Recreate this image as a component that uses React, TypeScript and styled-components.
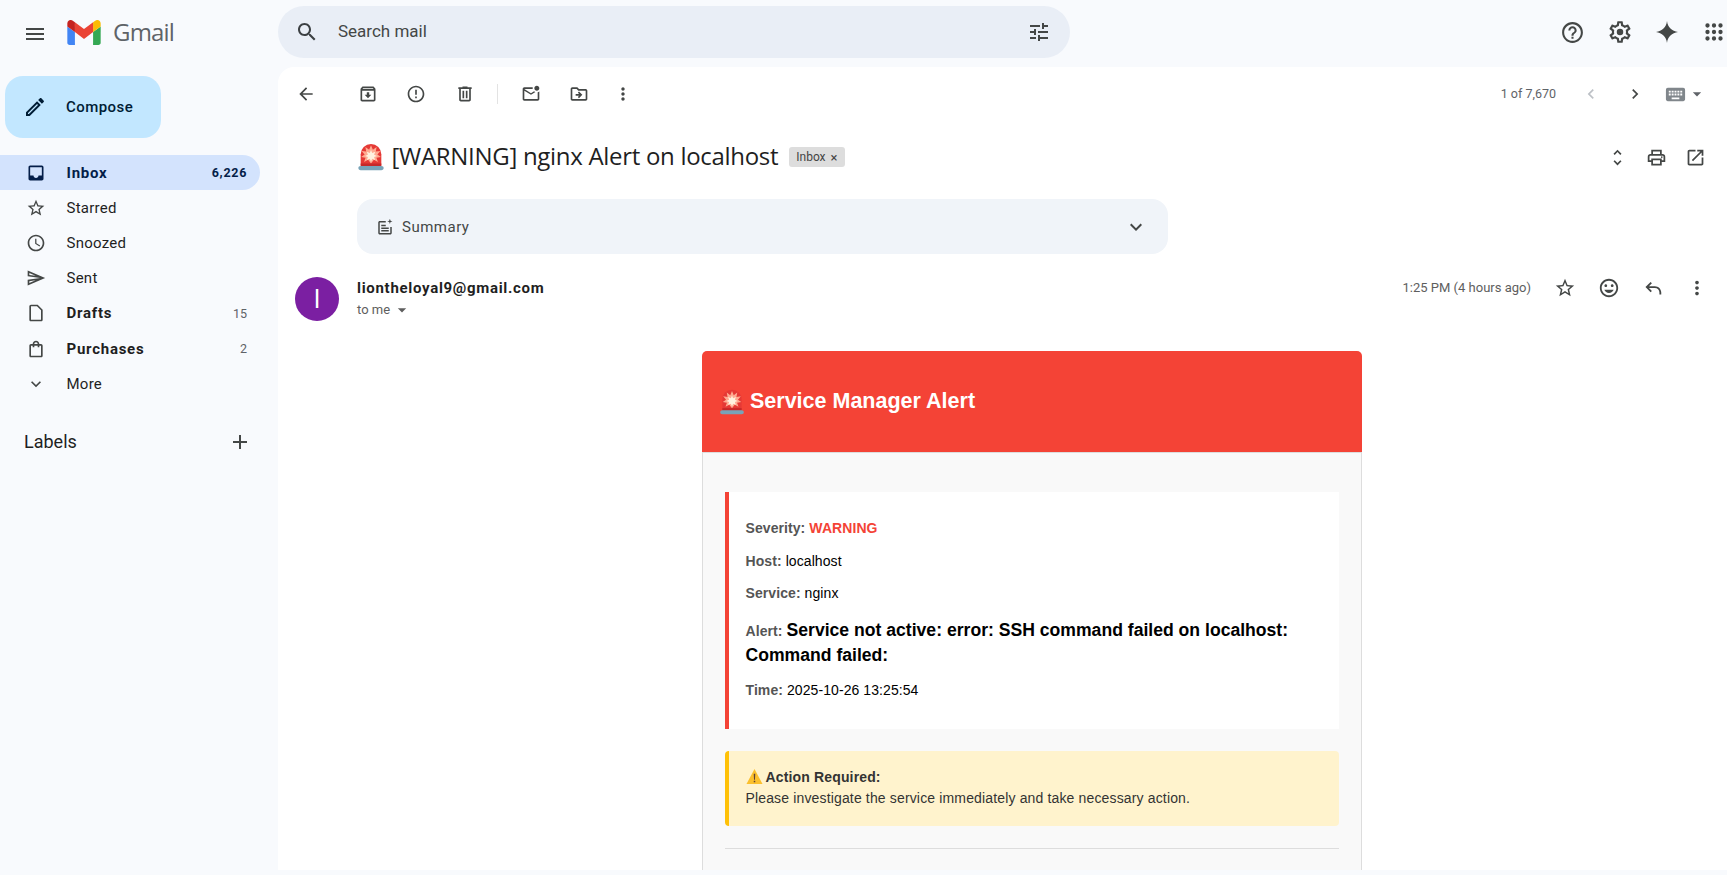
import React, {FC} from 'react'
import styled, {createGlobalStyle} from 'styled-components'

const UI_FONT = `Roboto, "Noto Sans", sans-serif`
const MAIL_FONT = `"Liberation Sans", Arial, sans-serif`

const GlobalStyle = createGlobalStyle`
    html, body {
        margin: 0;
        height: 100%;
        overflow: hidden;
        background: #f8fafd;
        font-family: ${UI_FONT};
    }
`

const paths = {
    menu: 'M3 18h18v-2H3v2zm0-5h18v-2H3v2zm0-7v2h18V6H3z',
    search: 'M15.5 14h-.79l-.28-.27C15.41 12.59 16 11.11 16 9.5 16 5.91 13.09 3 9.5 3S3 5.91 3 9.5 5.91 16 9.5 16c1.61 0 3.09-.59 4.23-1.57l.27.28v.79l5 4.99L20.49 19l-4.99-5zm-6 0C7.01 14 5 11.99 5 9.5S7.01 5 9.5 5 14 7.01 14 9.5 11.99 14 9.5 14z',
    tune: 'M3 17v2h6v-2H3zM3 5v2h10V5H3zm10 16v-2h8v-2h-8v-2h-2v6h2zM7 9v2H3v2h4v2h2V9H7zm14 4v-2H11v2h10zm-6-4h2V7h4V5h-4V3h-2v6z',
    help: 'M11 18h2v-2h-2v2zm1-16C6.48 2 2 6.48 2 12s4.48 10 10 10 10-4.48 10-10S17.52 2 12 2zm0 18c-4.41 0-8-3.59-8-8s3.59-8 8-8 8 3.59 8 8-3.59 8-8 8zm0-14c-2.21 0-4 1.79-4 4h2c0-1.1.9-2 2-2s2 .9 2 2c0 2-3 1.75-3 5h2c0-2.25 3-2.5 3-5 0-2.21-1.79-4-4-4z',
    settings: 'M19.43 12.98c.04-.32.07-.64.07-.98 0-.34-.03-.66-.07-.98l2.11-1.65c.19-.15.24-.42.12-.64l-2-3.46c-.09-.16-.26-.25-.44-.25-.06 0-.12.01-.17.03l-2.49 1c-.52-.4-1.08-.73-1.69-.98l-.38-2.65C14.46 2.18 14.25 2 14 2h-4c-.25 0-.46.18-.49.42l-.38 2.65c-.61.25-1.17.59-1.69.98l-2.49-1c-.06-.02-.12-.03-.18-.03-.17 0-.34.09-.43.25l-2 3.46c-.13.22-.07.49.12.64l2.11 1.65c-.04.32-.07.65-.07.98 0 .33.03.66.07.98l-2.11 1.65c-.19.15-.24.42-.12.64l2 3.46c.09.16.26.25.44.25.06 0 .12-.01.17-.03l2.49-1c.52.4 1.08.73 1.69.98l.38 2.65c.03.24.24.42.49.42h4c.25 0 .46-.18.49-.42l.38-2.65c.61-.25 1.17-.59 1.69-.98l2.49 1c.06.02.12.03.18.03.17 0 .34-.09.43-.25l2-3.46c.12-.22.07-.49-.12-.64l-2.11-1.65zm-1.98-1.71c.04.31.05.52.05.73 0 .21-.02.43-.05.73l-.14 1.13.89.7 1.08.84-.7 1.21-1.27-.51-1.04-.42-.9.68c-.43.32-.84.56-1.25.73l-1.06.43-.16 1.13-.2 1.35h-1.4l-.19-1.35-.16-1.13-1.06-.43c-.43-.18-.83-.41-1.23-.71l-.91-.7-1.06.43-1.27.51-.7-1.21 1.08-.84.89-.7-.14-1.13c-.03-.31-.05-.54-.05-.74s.02-.43.05-.73l.14-1.13-.89-.7-1.08-.84.7-1.21 1.27.51 1.04.42.9-.68c.43-.32.84-.56 1.25-.73l1.06-.43.16-1.13.2-1.35h1.39l.19 1.35.16 1.13 1.06.43c.43.18.83.41 1.23.71l.91.7 1.06-.43 1.27-.51.7 1.21-1.07.85-.89.7.14 1.13zM12 9a3 3 0 1 0 0 6 3 3 0 0 0 0-6z',
    spark: 'M12 1C12.6 7 17 11.4 23 12 17 12.6 12.6 17 12 23 11.4 17 7 12.6 1 12 7 11.4 11.4 7 12 1z',
    apps: 'M6 8a2 2 0 1 0 0-4 2 2 0 0 0 0 4zm6 0a2 2 0 1 0 0-4 2 2 0 0 0 0 4zm6 0a2 2 0 1 0 0-4 2 2 0 0 0 0 4zM6 14a2 2 0 1 0 0-4 2 2 0 0 0 0 4zm6 0a2 2 0 1 0 0-4 2 2 0 0 0 0 4zm6 0a2 2 0 1 0 0-4 2 2 0 0 0 0 4zM6 20a2 2 0 1 0 0-4 2 2 0 0 0 0 4zm6 0a2 2 0 1 0 0-4 2 2 0 0 0 0 4zm6 0a2 2 0 1 0 0-4 2 2 0 0 0 0 4z',
    back: 'M20 11H7.83l5.59-5.59L12 4l-8 8 8 8 1.41-1.41L7.83 13H20v-2z',
    archive: 'M20.54 5.23l-1.39-1.68C18.88 3.21 18.47 3 18 3H6c-.47 0-.88.21-1.16.55L3.46 5.23C3.17 5.57 3 6.02 3 6.5V19c0 1.1.9 2 2 2h14c1.1 0 2-.9 2-2V6.5c0-.48-.17-.93-.46-1.27zM6.24 5h11.52l.83 1H5.42l.82-1zM5 19V8h14v11H5zm8.45-9h-2.9v3H8l4 4 4-4h-2.55z',
    report: 'M11 15h2v2h-2zm0-8h2v6h-2zm.99-5C6.47 2 2 6.48 2 12s4.47 10 9.99 10C17.52 22 22 17.52 22 12S17.52 2 11.99 2zM12 20c-4.42 0-8-3.58-8-8s3.58-8 8-8 8 3.58 8 8-3.58 8-8 8z',
    trash: 'M15 4V3H9v1H4v2h1v13c0 1.1.9 2 2 2h10c1.1 0 2-.9 2-2V6h1V4h-5zm2 15H7V6h10v13zM9 8h2v9H9zm4 0h2v9h-2z',
    unread: 'M22 8.98V18c0 1.1-.9 2-2 2H4c-1.1 0-2-.9-2-2V6c0-1.1.9-2 2-2h10.1c-.06.32-.1.66-.1 1s.04.68.1 1H4l8 5 3.67-2.29c.47.43 1.02.76 1.63.98L12 13 4 8v10h16V9.9c.74-.15 1.42-.48 2-.92zM16 5c0 1.66 1.34 3 3 3s3-1.34 3-3-1.34-3-3-3-3 1.34-3 3z',
    move: 'M20 6h-8l-2-2H4c-1.1 0-1.99.9-1.99 2L2 18c0 1.1.9 2 2 2h16c1.1 0 2-.9 2-2V8c0-1.1-.9-2-2-2zm0 12H4V6h5.17l2 2H20v10zm-8.01-9l-1.41 1.41L12.16 12H8v2h4.16l-1.59 1.59L11.99 17 16 13.01 11.99 9z',
    more: 'M12 8c1.1 0 2-.9 2-2s-.9-2-2-2-2 .9-2 2 .9 2 2 2zm0 2c-1.1 0-2 .9-2 2s.9 2 2 2 2-.9 2-2-.9-2-2-2zm0 6c-1.1 0-2 .9-2 2s.9 2 2 2 2-.9 2-2-.9-2-2-2z',
    left: 'M15.41 7.41L14 6l-6 6 6 6 1.41-1.41L10.83 12z',
    right: 'M10 6L8.59 7.41 13.17 12l-4.58 4.59L10 18l6-6z',
    keyboard: 'M20 5H4c-1.1 0-1.99.9-1.99 2L2 17c0 1.1.9 2 2 2h16c1.1 0 2-.9 2-2V7c0-1.1-.9-2-2-2zm-9 3h2v2h-2V8zm0 3h2v2h-2v-2zM8 8h2v2H8V8zm0 3h2v2H8v-2zm-1 2H5v-2h2v2zm0-3H5V8h2v2zm9 7H8v-2h8v2zm0-4h-2v-2h2v2zm0-3h-2V8h2v2zm3 3h-2v-2h2v2zm0-3h-2V8h2v2z',
    caret: 'M7 10l5 5 5-5z',
    unfold: 'M12 5.83L15.17 9l1.41-1.41L12 3 7.41 7.59 8.83 9 12 5.83zm0 12.34L8.83 15l-1.41 1.41L12 21l4.59-4.59L15.17 15 12 18.17z',
    print: 'M19 8h-1V3H6v5H5c-1.66 0-3 1.34-3 3v6h4v4h12v-4h4v-6c0-1.66-1.34-3-3-3zM8 5h8v3H8V5zm8 12v2H8v-4h8v2zm2-2v-2H6v2H4v-4c0-.55.45-1 1-1h14c.55 0 1 .45 1 1v4h-2zm0-4.5a1 1 0 1 0 0 2 1 1 0 0 0 0-2z',
    open: 'M19 19H5V5h7V3H5c-1.11 0-2 .9-2 2v14c0 1.1.89 2 2 2h14c1.1 0 2-.9 2-2v-7h-2v7zM14 3v2h3.59l-9.83 9.83 1.41 1.41L19 6.41V10h2V3h-7z',
    star: 'M22 9.24l-7.19-.62L12 2 9.19 8.63 2 9.24l5.46 4.73L5.82 21 12 17.27 18.18 21l-1.63-7.03L22 9.24zM12 15.4l-3.76 2.27 1-4.28-3.32-2.88 4.38-.38L12 6.1l1.71 4.04 4.38.38-3.32 2.88 1 4.28L12 15.4z',
    smile: 'M11.99 2C6.47 2 2 6.48 2 12s4.47 10 9.99 10C17.52 22 22 17.52 22 12S17.52 2 11.99 2zM12 20c-4.42 0-8-3.58-8-8s3.58-8 8-8 8 3.58 8 8-3.58 8-8 8zm3.5-9c.83 0 1.5-.67 1.5-1.5S16.33 8 15.5 8 14 8.67 14 9.5s.67 1.5 1.5 1.5zm-7 0c.83 0 1.5-.67 1.5-1.5S9.33 8 8.5 8 7 8.67 7 9.5 7.67 11 8.5 11zm3.5 6.5c2.33 0 4.31-1.46 5.11-3.5H6.89c.8 2.04 2.78 3.5 5.11 3.5z',
    reply: 'M9.4 5.4 10.8 6.8 7.6 10H14c3.9 0 7 3.1 7 7v2h-2v-2c0-2.8-2.2-5-5-5H7.6l3.2 3.2-1.4 1.4L3.8 11z',
    inbox: 'M19 3H4.99c-1.11 0-1.98.89-1.98 2L3 19c0 1.1.88 2 1.99 2H19c1.1 0 2-.9 2-2V5c0-1.11-.9-2-2-2zm0 12h-4c0 1.66-1.35 3-3 3s-3-1.34-3-3H4.99V5H19v10z',
    clock: 'M11.99 2C6.47 2 2 6.48 2 12s4.47 10 9.99 10C17.52 22 22 17.52 22 12S17.52 2 11.99 2zM12 20c-4.42 0-8-3.58-8-8s3.58-8 8-8 8 3.58 8 8-3.58 8-8 8zm.5-13H11v6l5.25 3.15.75-1.23-4.5-2.67z',
    send: 'M4.01 6.03l7.51 3.22-7.52-1 .01-2.22m7.5 8.72L4 17.97v-2.22l7.51-1M2.01 3L2 10l15 2-15 2 .01 7L23 12 2.01 3z',
    draft: 'M14 2H6c-1.1 0-2 .9-2 2v16c0 1.1.9 2 2 2h12c1.1 0 2-.9 2-2V8zM18 20H6V4h7.17L18 8.83z',
    bag: 'M18 6h-2c0-2.21-1.79-4-4-4S8 3.79 8 6H6c-1.1 0-2 .9-2 2v12c0 1.1.9 2 2 2h12c1.1 0 2-.9 2-2V8c0-1.1-.9-2-2-2zm-6-2c1.1 0 2 .9 2 2h-4c0-1.1.9-2 2-2zm6 16H6V8h2v2h2V8h4v2h2V8h2v12z',
    expand: 'M16.59 8.59L12 13.17 7.41 8.59 6 10l6 6 6-6z',
    add: 'M19 13h-6v6h-2v-6H5v-2h6V5h2v6h6v2z',
    edit: 'M3 17.25V21h3.75L17.81 9.94l-3.75-3.75L3 17.25zM5.92 19H5v-.92l9.06-9.06.92.92L5.92 19zM20.71 5.63l-2.34-2.34c-.2-.2-.45-.29-.71-.29s-.51.1-.7.29l-1.83 1.83 3.75 3.75 1.83-1.83c.39-.39.39-1.02 0-1.41z',
    summary: 'M13 4v2H5v14h14v-8h2v8c0 1.1-.9 2-2 2H5c-1.1 0-2-.9-2-2V6c0-1.1.9-2 2-2h8zM7 9h6v2H7V9zm0 3.5h10v2H7v-2zM7 16h10v2H7v-2zM18.5 1l.9 2.6L22 4.5l-2.6.9-.9 2.6-.9-2.6-2.6-.9 2.6-.9z',
}

const Svg = styled.svg<{$size: number; $color: string}>`
    display: block;
    flex: none;
    width: ${(p) => p.$size}px;
    height: ${(p) => p.$size}px;
    fill: ${(p) => p.$color};
`

type IconProps = {name: keyof typeof paths; size?: number; color?: string}

const Icon: FC<IconProps> = ({name, size = 20, color = '#444746'}) => (
    <Svg viewBox="0 0 24 24" $size={size} $color={color}>
        <path d={paths[name]} />
    </Svg>
)

const LogoSvg = styled.svg`
    display: block;
    width: 34px;
    height: 25px;
`

const GmailLogo = () => (
    <LogoSvg viewBox="52 42 88 66">
        <path fill="#4285f4" d="M58 108h14V74L52 59v43c0 3.32 2.69 6 6 6" />
        <path fill="#34a853" d="M120 108h14c3.32 0 6-2.69 6-6V59l-20 15" />
        <path fill="#fbbc04" d="M120 48v26l20-15v-8c0-7.42-8.47-11.65-14.4-7.2" />
        <path fill="#ea4335" d="M72 74V48l24 18 24-18v26L96 92" />
        <path fill="#c5221f" d="M52 51v8l20 15V48l-5.6-4.2c-5.94-4.45-14.4-.22-14.4 7.2" />
    </LogoSvg>
)

const SirenSvg = styled.svg<{$offset?: number}>`
    flex: none;
    display: block;
    margin-left: ${(p) => p.$offset ?? 0}px;
`

const Siren: FC<{size: number; offset?: number}> = ({size, offset}) => (
    <SirenSvg viewBox="0 0 32 32" width={size} height={size} $offset={offset}>
        <path fill="#e53935" d="M5 25V13a11 11 0 0 1 22 0v12z" />
        <path fill="#ffab91" d="M16 3.500l2 4.700 4-3-.9 5 5-.7-3.300 3.800 3.800 2.700-4.800.8 1.600 4.500-4.300-2.300-3.100 4-3.100-4-4.300 2.300 1.600-4.500-4.800-.8 3.800-2.700-3.300-3.800 5 .7-.9-5 4 3z" />
        <path fill="#fff3e0" d="M16 8.500l1.300 3.100 3.200-1.300-1.200 3.200 3.100 1.300-3.100 1.300 1.100 3-3.100-1.200-1.300 3-1.300-3-3.100 1.200 1.100-3-3.100-1.300 3.100-1.300-1.200-3.200 3.200 1.300z" />
        <path fill="#c62828" d="M5 23h22v3H5z" />
        <path fill="#78a3b8" d="M5 25.500h22c1.600 0 2.500 1 2.500 2.300S28.600 30 27 30H5c-1.600 0-2.500-.9-2.500-2.200S3.400 25.500 5 25.500z" />
    </SirenSvg>
)

const WarningSvg = styled.svg`
    display: inline-block;
    width: 17px;
    height: 19px;
    vertical-align: -4px;
    margin-right: 3px;
`

const WarningSign = () => (
    <WarningSvg viewBox="0 0 18 18">
        <path fill="#fbc02d" d="M9 1 17.500 17h-17z" />
        <path fill="#5d4037" d="M8.200 6h1.600l-.3 6.500h-1zM8.200 13.500h1.600v1.600H8.200z" />
    </WarningSvg>
)

const Page = styled.div`
    height: 875px;
    width: 1727px;
    overflow: hidden;
`

const TopBar = styled.header`
    height: 67px;
    display: flex;
    align-items: center;
`

const Brand = styled.div`
    width: 278px;
    flex: none;
    display: flex;
    align-items: center;
    padding-left: 23px;
    box-sizing: border-box;
`

const BrandLogo = styled.div`
    margin-left: 20px;
    margin-top: -2px;
`

const BrandName = styled.span`
    margin-left: 12px;
    margin-top: -5px;
    font-family: "Open Sans", sans-serif;
    font-size: 24px;
    letter-spacing: -0.8px;
    color: #5f6368;
`

const SearchBox = styled.div`
    width: 792px;
    height: 52px;
    margin-top: -3px;
    flex: none;
    display: flex;
    align-items: center;
    padding: 0 19px 0 17px;
    box-sizing: border-box;
    background: #e9eef6;
    border-radius: 26px;
`

const SearchText = styled.span`
    flex: 1;
    margin: -2px 0 0 19px;
    font-size: 17px;
    color: #444746;
`

const TopActions = styled.div`
    margin-left: auto;
    display: flex;
    align-items: center;
    gap: 22px;
    margin-top: -3px;
    & > :last-child {
        margin-left: 0;
    }
`

const Body = styled.div`
    display: flex;
    height: 803px;
`

const Sidebar = styled.aside`
    width: 278px;
    flex: none;
    padding-top: 9px;
    box-sizing: border-box;
`

const ComposeButton = styled.div`
    width: 156px;
    height: 62px;
    margin-left: 5px;
    display: flex;
    align-items: center;
    gap: 19px;
    padding-left: 18px;
    box-sizing: border-box;
    background: #c2e7ff;
    border-radius: 18px;
    font-size: 15px;
    font-weight: 500;
    letter-spacing: .45px;
    color: #001d35;
`

const NavList = styled.nav`
    margin-top: 17px;
    width: 260px;
`

const NavRow = styled.div<{$active?: boolean; $strong?: boolean}>`
    height: 35.200px;
    display: flex;
    align-items: center;
    gap: 20.500px;
    padding: 0 13px 0 26px;
    box-sizing: border-box;
    border-radius: 0 18px 18px 0;
    font-size: 15px;
    font-weight: ${(p) => (p.$strong ? 700 : 400)};
    letter-spacing: ${(p) => (p.$strong ? '.75px' : '.25px')};
    color: ${(p) => (p.$active ? '#041e49' : '#1f1f1f')};
    background: ${(p) => (p.$active ? '#d3e3fd' : 'transparent')};
`

const NavLabel = styled.span`
    flex: 1;
`

const NavCount = styled.span<{$active?: boolean}>`
    font-size: 12.500px;
    font-weight: ${(p) => (p.$active ? 700 : 400)};
    letter-spacing: ${(p) => (p.$active ? '.7px' : '0')};
    color: ${(p) => (p.$active ? '#041e49' : '#5f6368')};
`

const LabelsHeader = styled.div`
    margin-top: 22.500px;
    width: 260px;
    height: 36px;
    display: flex;
    align-items: center;
    justify-content: space-between;
    padding: 0 8px 0 24px;
    box-sizing: border-box;
    font-size: 18px;
    color: #1f1f1f;
`

const Panel = styled.main`
    flex: 1;
    background: #fff;
    border-radius: 16px 0 0 0;
    overflow: hidden;
    display: flex;
    flex-direction: column;
`

const Toolbar = styled.div`
    height: 54px;
    flex: none;
    display: flex;
    align-items: center;
    padding: 0 0 0 8px;
`

const ToolButton = styled.div<{$gap?: number; $width?: number}>`
    width: ${(p) => p.$width ?? 40}px;
    height: 40px;
    margin-left: ${(p) => p.$gap ?? 8}px;
    flex: none;
    display: flex;
    align-items: center;
    justify-content: center;
`

const Divider = styled.div`
    width: 1px;
    height: 20px;
    margin-left: 12px;
    background: #e3e3e3;
`

const Pager = styled.span`
    margin-left: auto;
    font-size: 12.500px;
    margin-top: -1px;
    color: #5f6368;
`

const KeyboardPick = styled.div`
    display: flex;
    align-items: center;
    margin: 0 20px 0 9px;
`

const SubjectRow = styled.div`
    height: 72px;
    flex: none;
    display: flex;
    align-items: center;
    padding-left: 78px;
    padding-right: 21px;
`

const SubjectText = styled.h1`
    margin: -4px 0 0 5.500px;
    font-size: 24px;
    font-weight: 400;
    font-family: "Open Sans", sans-serif;
    letter-spacing: -0.3px;
    color: #1f1f1f;
    white-space: nowrap;
`

const InboxChip = styled.span`
    margin-left: 11px;
    height: 20px;
    padding: 0 7px;
    display: flex;
    align-items: center;
    gap: 5px;
    background: #dddddd;
    border-radius: 3px;
    font-size: 12px;
    color: #444;
`

const ChipClose = styled.span`
    font-size: 13px;
    color: #444;
`

const SubjectActions = styled.div`
    margin-left: auto;
    display: flex;
    align-items: center;
    gap: 18px;
`

const SummaryCard = styled.div`
    width: 811px;
    height: 55px;
    margin: 6px 0 0 79px;
    flex: none;
    display: flex;
    align-items: center;
    padding: 0 20px 0 19px;
    box-sizing: border-box;
    background: #f0f4f9;
    border-radius: 16px;
    font-size: 15px;
    font-weight: 400;
    letter-spacing: .5px;
    color: #444746;
`

const SummaryLabel = styled.span`
    flex: 1;
    margin-left: 8px;
`

const SenderRow = styled.div`
    flex: none;
    display: flex;
    margin-top: 23px;
    padding: 0 19px 0 17px;
`

const Avatar = styled.div`
    width: 44px;
    height: 44px;
    flex: none;
    border-radius: 50%;
    background: #7b1fa2;
    color: #fff;
    font-size: 25px;
    display: flex;
    align-items: center;
    justify-content: center;
`

const SenderInfo = styled.div`
    margin-left: 18px;
    flex: 1;
`

const SenderName = styled.div`
    font-size: 15px;
    font-weight: 700;
    letter-spacing: .7px;
    line-height: 22px;
    color: #1f1f1f;
`

const ToMe = styled.div`
    margin-top: 1px;
    display: flex;
    align-items: center;
    gap: 2px;
    font-size: 13px;
    line-height: 18px;
    color: #5e5e5e;
`

const MessageMeta = styled.div`
    display: flex;
    align-items: flex-start;
    gap: 23px;
`

const TimeStamp = styled.span`
    font-size: 13px;
    line-height: 22px;
    color: #5e5e5e;
`

const MetaIcons = styled.div`
    display: flex;
    gap: 22px;
`

const MailArea = styled.div`
    flex: 1;
    display: flex;
    justify-content: center;
    padding: 30px 20px 0 79px;
    min-height: 0;
`

const MailCard = styled.article`
    width: 660px;
    flex: none;
    font-family: ${MAIL_FONT};
    font-size: 14px;
    color: #000;
`

const MailHeader = styled.div`
    background: #f44336;
    border-radius: 5px 5px 0 0;
    padding: 20px;
    color: #fff;
`

const MailTitle = styled.h2`
    margin: 18px 0;
    height: 25px;
    display: flex;
    align-items: center;
    gap: 4px;
    font-size: 21.500px;
    line-height: 25px;
    font-weight: 700;
`

const MailBody = styled.div`
    background: #f9f9f9;
    border: 1px solid #ddd;
    padding: 0 22px 40px;
`

const Details = styled.div`
    margin-top: 39px;
    background: #fff;
    border-left: 4px solid #f44336;
    padding: 15px 15px 17.500px 16.500px;
`

const DetailLine = styled.p<{$tall?: boolean}>`
    margin: ${(p) => (p.$tall ? '13px' : '10px')} 0 10px;
    line-height: 22.500px;
    letter-spacing: .08px;
`

const DetailKey = styled.strong`
    color: #555;
`

const Severity = styled.strong`
    color: #f44336;
`

const BigAlert = styled.strong`
    font-size: 17.600px;
    line-height: 25.500px;
    letter-spacing: 0;
`

const ActionBox = styled.div`
    margin-top: 22px;
    background: #fff3cd;
    border-left: 4px solid #ffc107;
    border-radius: 4px;
    padding: 16px 15px 16px 16.500px;
    line-height: 21.800px;
    letter-spacing: .15px;
    color: #333;
`

const Rule = styled.hr`
    margin: 21.500px 0 0;
    border: 0;
    border-top: 1px solid #ddd;
`

const navItems: {icon: keyof typeof paths; label: string; count?: string; strong?: boolean; active?: boolean}[] = [
    {icon: 'inbox', label: 'Inbox', count: '6,226', strong: true, active: true},
    {icon: 'star', label: 'Starred'},
    {icon: 'clock', label: 'Snoozed'},
    {icon: 'send', label: 'Sent'},
    {icon: 'draft', label: 'Drafts', count: '15', strong: true},
    {icon: 'bag', label: 'Purchases', count: '2', strong: true},
    {icon: 'expand', label: 'More'},
]

export default function App() {
    return (
        <Page>
            <GlobalStyle />
            <TopBar>
                <Brand>
                    <Icon name="menu" size={24} />
                    <BrandLogo><GmailLogo /></BrandLogo>
                    <BrandName>Gmail</BrandName>
                </Brand>
                <SearchBox>
                    <Icon name="search" size={24} color="#3c4043" />
                    <SearchText>Search mail</SearchText>
                    <Icon name="tune" size={24} />
                </SearchBox>
                <TopActions>
                    <Icon name="help" size={25} />
                    <Icon name="settings" size={26} />
                    <Icon name="spark" size={24} />
                    <Icon name="apps" size={26} />
                </TopActions>
            </TopBar>
            <Body>
                <Sidebar>
                    <ComposeButton>
                        <Icon name="edit" size={24} color="#001d35" />
                        Compose
                    </ComposeButton>
                    <NavList>
                        {navItems.map((item) => (
                            <NavRow key={item.label} $active={item.active} $strong={item.strong}>
                                <Icon name={item.icon} size={20} color={item.active ? '#041e49' : '#444746'} />
                                <NavLabel>{item.label}</NavLabel>
                                {item.count && <NavCount $active={item.active}>{item.count}</NavCount>}
                            </NavRow>
                        ))}
                    </NavList>
                    <LabelsHeader>
                        Labels
                        <Icon name="add" size={24} />
                    </LabelsHeader>
                </Sidebar>
                <Panel>
                    <Toolbar>
                        <ToolButton $gap={0}><Icon name="back" /></ToolButton>
                        <ToolButton $gap={22}><Icon name="archive" /></ToolButton>
                        <ToolButton><Icon name="report" /></ToolButton>
                        <ToolButton $gap={9}><Icon name="trash" /></ToolButton>
                        <Divider />
                        <ToolButton $gap={13}><Icon name="unread" /></ToolButton>
                        <ToolButton><Icon name="move" /></ToolButton>
                        <ToolButton $gap={4}><Icon name="more" /></ToolButton>
                        <Pager>1 of 7,670</Pager>
                        <ToolButton $gap={15}><Icon name="left" color="#bdc1c6" /></ToolButton>
                        <ToolButton $gap={4}><Icon name="right" /></ToolButton>
                        <KeyboardPick>
                            <Icon name="keyboard" size={23} color="#80868b" />
                            <Icon name="caret" size={20} color="#5f6368" />
                        </KeyboardPick>
                    </Toolbar>
                    <SubjectRow>
                        <Siren size={30} />
                        <SubjectText>[WARNING] nginx Alert on localhost</SubjectText>
                        <InboxChip>Inbox<ChipClose>×</ChipClose></InboxChip>
                        <SubjectActions>
                            <Icon name="unfold" size={21} />
                            <Icon name="print" size={21} />
                            <Icon name="open" size={21} />
                        </SubjectActions>
                    </SubjectRow>
                    <SummaryCard>
                        <Icon name="summary" size={18} />
                        <SummaryLabel>Summary</SummaryLabel>
                        <Icon name="expand" size={24} />
                    </SummaryCard>
                    <SenderRow>
                        <Avatar>l</Avatar>
                        <SenderInfo>
                            <SenderName>liontheloyal9@gmail.com</SenderName>
                            <ToMe>to me<Icon name="caret" size={20} color="#5e5e5e" /></ToMe>
                        </SenderInfo>
                        <MessageMeta>
                            <TimeStamp>1:25 PM (4 hours ago)</TimeStamp>
                            <MetaIcons>
                                <Icon name="star" size={22} />
                                <Icon name="smile" size={22} />
                                <Icon name="reply" size={22} />
                                <Icon name="more" size={22} />
                            </MetaIcons>
                        </MessageMeta>
                    </SenderRow>
                    <MailArea>
                        <MailCard>
                            <MailHeader>
                                <MailTitle><Siren size={28} offset={-4} />Service Manager Alert</MailTitle>
                            </MailHeader>
                            <MailBody>
                                <Details>
                                    <DetailLine><DetailKey>Severity:</DetailKey> <Severity>WARNING</Severity></DetailLine>
                                    <DetailLine><DetailKey>Host:</DetailKey> localhost</DetailLine>
                                    <DetailLine><DetailKey>Service:</DetailKey> nginx</DetailLine>
                                    <DetailLine $tall><DetailKey>Alert:</DetailKey> <BigAlert>Service not active: error: SSH command failed on localhost: Command failed:</BigAlert></DetailLine>
                                    <DetailLine><DetailKey>Time:</DetailKey> 2025-10-26 13:25:54</DetailLine>
                                </Details>
                                <ActionBox>
                                    <WarningSign /><strong>Action Required:</strong><br />
                                    Please investigate the service immediately and take necessary action.
                                </ActionBox>
                                <Rule />
                            </MailBody>
                        </MailCard>
                    </MailArea>
                </Panel>
            </Body>
        </Page>
    )
}
